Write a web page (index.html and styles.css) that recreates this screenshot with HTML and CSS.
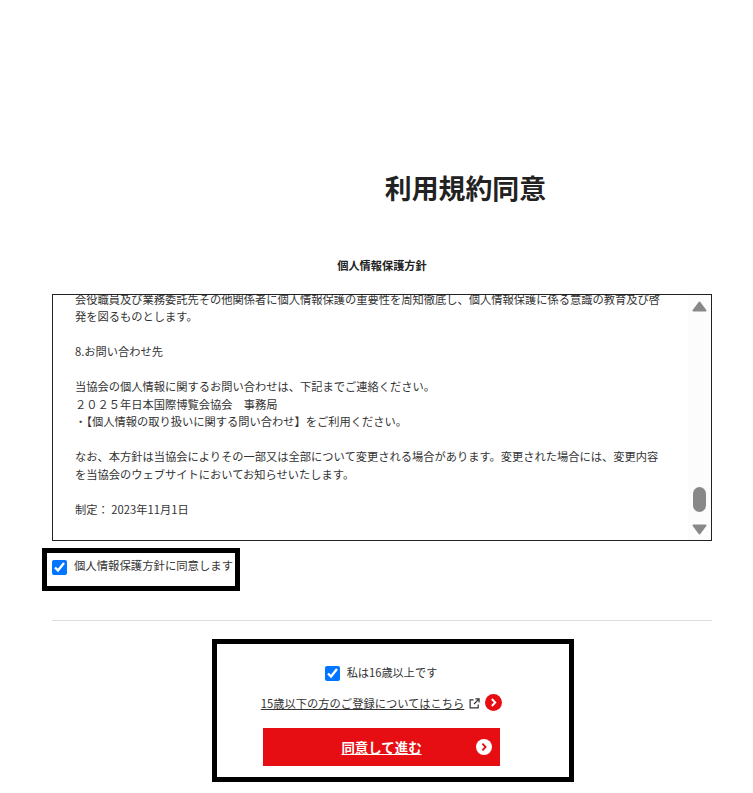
FILE: index.html
```html
<!DOCTYPE html>
<html lang="ja">
<head>
<meta charset="utf-8">
<title>利用規約同意</title>
<link rel="stylesheet" href="styles.css">
</head>
<body>
<main class="page">
  <h1 class="title">利用規約同意</h1>
  <h2 class="policy-heading">個人情報保護方針</h2>
  <section class="policy-box">
    <div class="policy-scroll">
      <div class="policy-text">
        <p>会役職員及び業務委託先その他関係者に個人情報保護の重要性を周知徹底し、個人情報保護に係る意識の教育及び啓発を図るものとします。</p>
        <p>8.お問い合わせ先</p>
        <p>当協会の個人情報に関するお問い合わせは、下記までご連絡ください。<br>２０２５年日本国際博覧会協会　事務局<br>・【個人情報の取り扱いに関する問い合わせ】をご利用ください。</p>
        <p>なお、本方針は当協会によりその一部又は全部について変更される場合があります。変更された場合には、変更内容を当協会のウェブサイトにおいてお知らせいたします。</p>
        <p>制定： 2023年11月1日</p>
      </div>
    </div>
    <div class="scrollbar">
      <svg class="arrow" viewBox="0 0 15 11" aria-hidden="true"><path d="M7.500 1.500 13.500 9.500H1.500Z" fill="#888" stroke="#888" stroke-width="2" stroke-linejoin="round"/></svg>
      <span class="thumb"></span>
      <svg class="arrow" viewBox="0 0 15 11" aria-hidden="true"><path d="M7.500 9.500 13.500 1.500H1.500Z" fill="#888" stroke="#888" stroke-width="2" stroke-linejoin="round"/></svg>
    </div>
  </section>
  <label class="agree-policy">
    <input type="checkbox" class="check" checked>
    <span>個人情報保護方針に同意します</span>
  </label>
  <hr class="divider">
  <section class="age-box">
    <label class="age-check">
      <input type="checkbox" class="check" checked>
      <span>私は16歳以上です</span>
    </label>
    <div class="under-link">
      <a href="#">15歳以下の方のご登録についてはこちら</a>
      <svg class="ext-icon" viewBox="0 0 12 12" aria-hidden="true"><path d="M5 2H1.200v8.800H10V7M7 1h4v4M11 1 5.500 6.500" fill="none" stroke="#333" stroke-width="1.300"/></svg>
      <svg class="circle-red" viewBox="0 0 17 17" aria-hidden="true"><circle cx="8.500" cy="8.500" r="8.500" fill="#e60e12"/><path d="M6.800 5l3.400 3.500-3.400 3.500" fill="none" stroke="#fff" stroke-width="2"/></svg>
    </div>
    <a class="proceed" href="#">
      <span>同意して進む</span>
      <svg class="circle-white" viewBox="0 0 17 17" aria-hidden="true"><circle cx="8.500" cy="8.500" r="8.500" fill="#fff"/><path d="M6.800 5l3.400 3.500-3.400 3.500" fill="none" stroke="#e60e12" stroke-width="2"/></svg>
    </a>
  </section>
</main>
</body>
</html>
```
FILE: styles.css
```css
* { box-sizing: border-box; }
html, body { margin: 0; background: #fff; }
body {
  font-family: "Noto Sans CJK JP", "Noto Sans", sans-serif;
  color: #333;
}
.page {
  width: 660px;
  margin-left: 52px;
  padding-top: 168px;
  display: flex;
  flex-direction: column;
}
.title {
  margin: 0 0 0 167px;
  text-align: center;
  font-size: 26.880px;
  line-height: 40px;
  font-weight: 700;
  color: #222;
}
.policy-heading {
  margin: 48px 0 0;
  text-align: center;
  font-size: 11.200px;
  line-height: 18px;
  font-weight: 700;
  color: #222;
}
.policy-box {
  margin-top: 20px;
  height: 247px;
  border: 1px solid #222;
  display: flex;
  overflow: hidden;
}
.policy-scroll {
  flex: 1;
  overflow: hidden;
  padding: 0 28px 0 22px;
}
.policy-text {
  margin-top: -4.500px;
  font-size: 11.250px;
  line-height: 17.550px;
  color: #333;
}
.policy-text p { margin: 0 0 17.550px; }
.scrollbar {
  width: 23px;
  background: #fcfcfc;
  display: flex;
  flex-direction: column;
  align-items: center;
  padding: 6px 0 5px;
}
.arrow {
  width: 15px;
  height: 11px;
  flex: none;
}
.thumb {
  width: 13px;
  height: 25px;
  margin-top: auto;
  margin-bottom: 12px;
  border-radius: 7px;
  background: #888;
}
.check {
  width: 15px;
  height: 15px;
  margin: 0;
  accent-color: #0075ff;
  flex: none;
}
.agree-policy {
  align-self: flex-start;
  margin: 7px 0 0 -10px;
  width: 198px;
  height: 43px;
  border: 5px solid #000;
  padding: 4px 0 0 5px;
  display: flex;
  gap: 7px;
  font-size: 11.360px;
  line-height: 17px;
  color: #333;
}
.agree-policy .check { margin-top: 3px; }
.divider {
  margin: 29px 0 0;
  border: 0;
  border-top: 1px solid #ddd;
}
.age-box {
  align-self: flex-start;
  margin: 18px 0 0 160px;
  width: 362px;
  height: 143px;
  border: 5px solid #000;
  display: flex;
  flex-direction: column;
  align-items: center;
  padding: 22px 25px 0 0;
}
.age-check {
  display: flex;
  align-items: center;
  gap: 7px;
  font-size: 11.200px;
  line-height: 15px;
  margin-left: 1px;
}
.age-check span { margin-top: -2px; }
.under-link {
  margin-top: 13px;
  margin-left: 2px;
  height: 17px;
  display: flex;
  align-items: center;
  font-size: 11.280px;
}
.under-link a {
  color: #333;
  text-decoration: underline;
}
.ext-icon { width: 11px; height: 11px; margin: 2px 0 0 5px; flex: none; }
.circle-red { width: 17px; height: 17px; margin-left: 5px; flex: none; }
.proceed {
  position: relative;
  margin-top: 17px;
  margin-left: 2px;
  width: 237px;
  height: 38px;
  flex: none;
  background: #e60e12;
  color: #fff;
  display: flex;
  align-items: center;
  justify-content: center;
  font-size: 13.440px;
  font-weight: 700;
  text-decoration: underline;
}
.circle-white {
  position: absolute;
  right: 8px;
  top: 11px;
  width: 16px;
  height: 16px;
}
```
